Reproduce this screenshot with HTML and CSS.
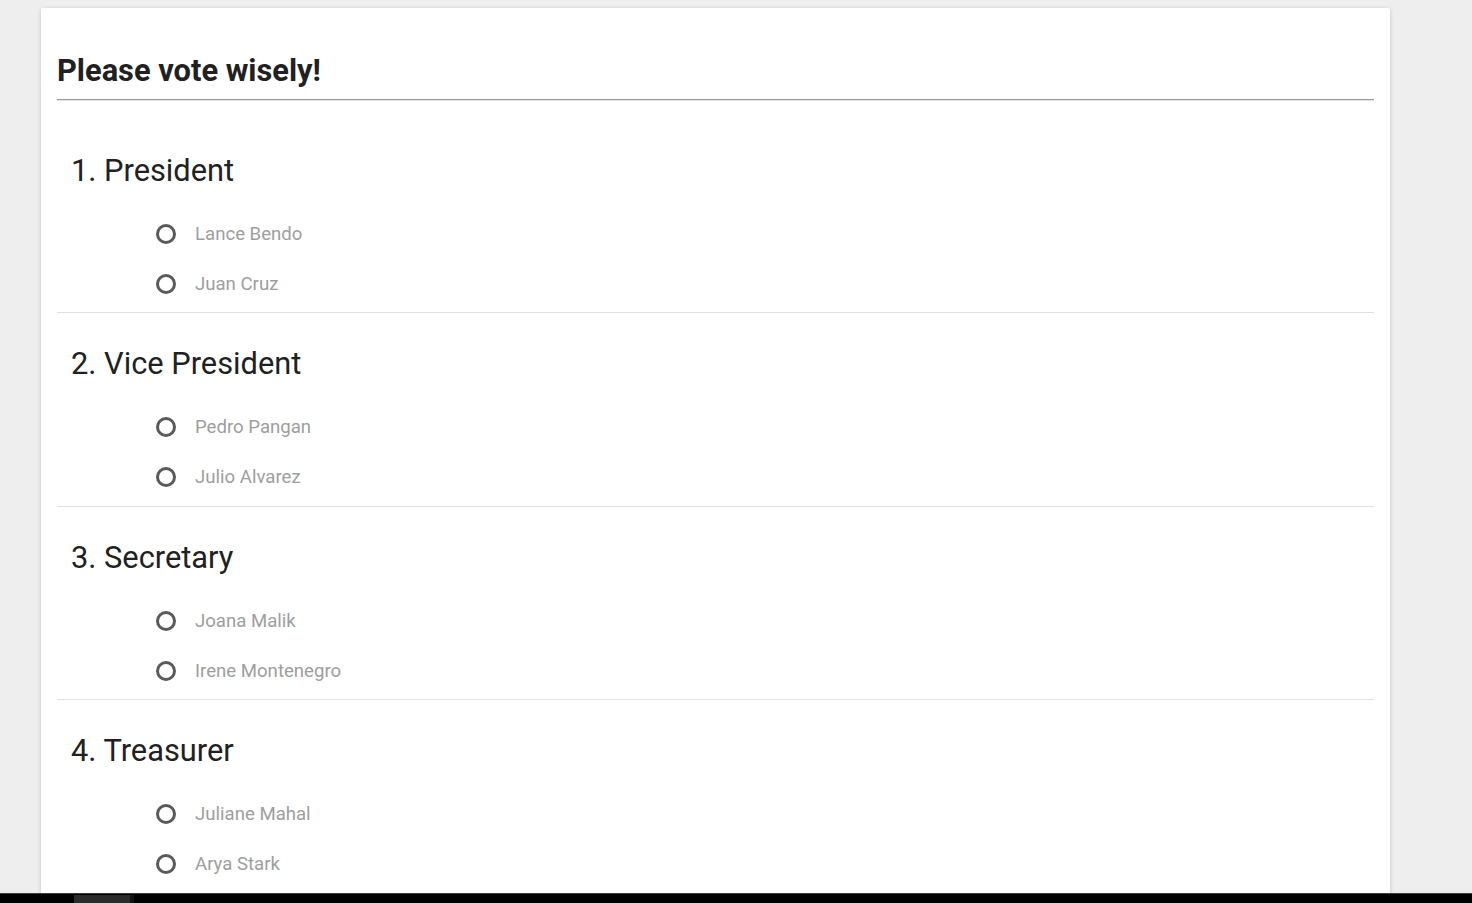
FILE: index.html
```html
<!DOCTYPE html>
<html lang="en">
<head>
<meta charset="utf-8">
<title>Vote</title>
<link rel="stylesheet" href="styles.css">
</head>
<body>
<main class="card">
  <h1 class="title">Please vote wisely!</h1>
  <section class="position first">
    <h2 class="pos-title">1. President</h2>
    <ul class="options">
      <li class="option"><span class="radio"></span><span class="label">Lance Bendo</span></li>
      <li class="option"><span class="radio"></span><span class="label">Juan Cruz</span></li>
    </ul>
  </section>
  <section class="position">
    <h2 class="pos-title">2. Vice President</h2>
    <ul class="options">
      <li class="option"><span class="radio"></span><span class="label">Pedro Pangan</span></li>
      <li class="option"><span class="radio"></span><span class="label">Julio Alvarez</span></li>
    </ul>
  </section>
  <section class="position">
    <h2 class="pos-title">3. Secretary</h2>
    <ul class="options">
      <li class="option"><span class="radio"></span><span class="label">Joana Malik</span></li>
      <li class="option"><span class="radio"></span><span class="label">Irene Montenegro</span></li>
    </ul>
  </section>
  <section class="position">
    <h2 class="pos-title">4. Treasurer</h2>
    <ul class="options">
      <li class="option"><span class="radio"></span><span class="label">Juliane Mahal</span></li>
      <li class="option"><span class="radio"></span><span class="label">Arya Stark</span></li>
    </ul>
  </section>
</main>
<div class="hscroll"><div class="thumb"></div></div>
</body>
</html>
```
FILE: styles.css
```css
html { overflow: hidden; }
body {
  margin: 0;
  background: #eeeeee;
  font-family: Roboto, "Noto Sans", sans-serif;
  color: #212121;
}
.card {
  margin: 8px 0 0 41px;
  width: 1349px;
  box-sizing: border-box;
  background: #fff;
  border-radius: 2px;
  box-shadow: 0 1px 4px rgba(0,0,0,0.18);
  padding: 43px 16px 40px;
}
.title {
  margin: 0;
  font-size: 30.8px;
  line-height: 40px;
  font-weight: 700;
  padding-bottom: 8px;
  border-bottom: 1px solid #9a9a9a;
  box-shadow: 0 1px 0 #e4e4e4;
}
.position {
  border-top: 1px solid #e0e0e0;
  padding: 31px 0 3.5px 14px;
}
.position.first {
  border-top: none;
  padding-top: 51px;
  padding-bottom: 3px;
}
.pos-title {
  margin: 0;
  font-size: 30.8px;
  line-height: 40px;
  font-weight: 400;
  color: #212121;
}
.options {
  list-style: none;
  margin: 18px 0 0;
  padding: 0 0 0 85px;
}
.option {
  height: 50px;
  display: flex;
  align-items: center;
  gap: 19px;
}
.radio {
  width: 20px;
  height: 20px;
  box-sizing: border-box;
  border: 3px solid #5a5a5a;
  border-radius: 50%;
  flex: none;
}
.label {
  font-size: 18.6px;
  color: #9e9e9e;
}
.hscroll {
  position: fixed;
  left: 0;
  right: 0;
  bottom: 0;
  height: 9px;
  background: #000;
  border-top: 1px solid #3c3c3c;
}
.thumb {
  position: absolute;
  left: 74px;
  top: 1px;
  width: 56px;
  height: 8px;
  background: #2b2b2b;
  border-right: 4px solid #111;
}
```
